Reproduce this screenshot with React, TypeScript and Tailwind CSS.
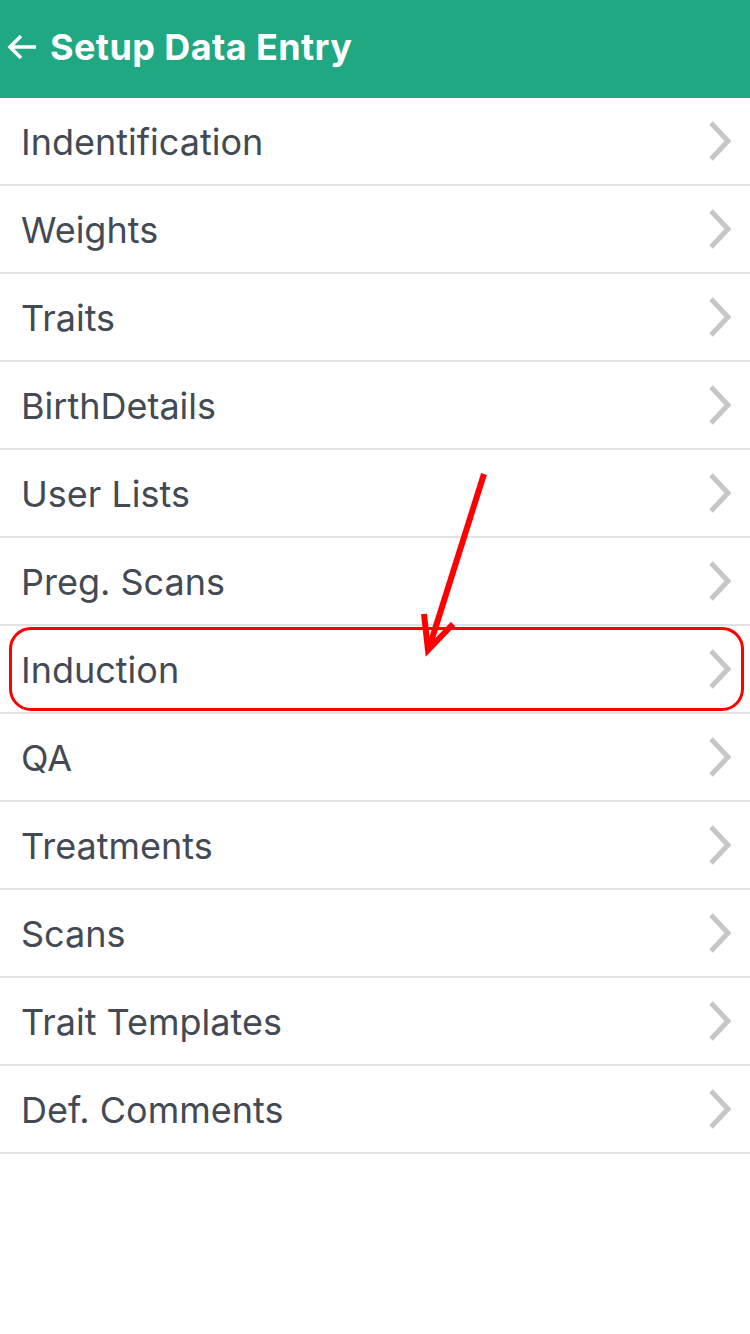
const items = [
  "Indentification",
  "Weights",
  "Traits",
  "BirthDetails",
  "User Lists",
  "Preg. Scans",
  "Induction",
  "QA",
  "Treatments",
  "Scans",
  "Trait Templates",
  "Def. Comments",
];

function Chevron() {
  return (
    <svg width="26" height="42" viewBox="0 0 26 42" className="shrink-0">
      <path d="M4 3 L21 21 L4 39" fill="none" stroke="#c4c6c9" strokeWidth="5" />
    </svg>
  );
}

export default function App() {
  return (
    <div
      className="relative w-[750px] h-[1334px] bg-white overflow-hidden"
      style={{ fontFamily: "Inter, 'Noto Sans', sans-serif" }}
    >
      {/* Header */}
      <div className="h-[98px] bg-[#1fa882] flex items-center pl-[6px] pb-[4px]">
        <svg width="32" height="28" viewBox="0 0 32 28" className="mr-[12px]">
          <path d="M30 14 H4 M15 3 L4 14 L15 25" fill="none" stroke="#fff" strokeWidth="3.5" />
        </svg>
        <span className="text-white font-bold text-[36px] tracking-[0.4px]">Setup Data Entry</span>
      </div>

      {/* List */}
      <div className="flex flex-col">
        {items.map((label) => (
          <div
            key={label}
            className="h-[88px] flex items-center justify-between pl-[21px] pr-[17px] border-b-2 border-[#e2e2e2]"
          >
            <span className="text-[36px] text-[#434a54] pt-[2px]">{label}</span>
            <Chevron />
          </div>
        ))}
      </div>

      {/* Annotation overlay */}
      <div className="absolute left-[9px] top-[627px] w-[735px] h-[84px] rounded-[22px] border-[3px] border-[#ff0000]" />
      <svg className="absolute left-0 top-0 pointer-events-none" width="750" height="1334">
        <line x1="484" y1="474" x2="430" y2="645" stroke="#ff0000" strokeWidth="6" />
        <path d="M424 614 L428 650 L453 624" fill="none" stroke="#ff0000" strokeWidth="6" strokeLinejoin="miter" />
      </svg>
    </div>
  );
}
